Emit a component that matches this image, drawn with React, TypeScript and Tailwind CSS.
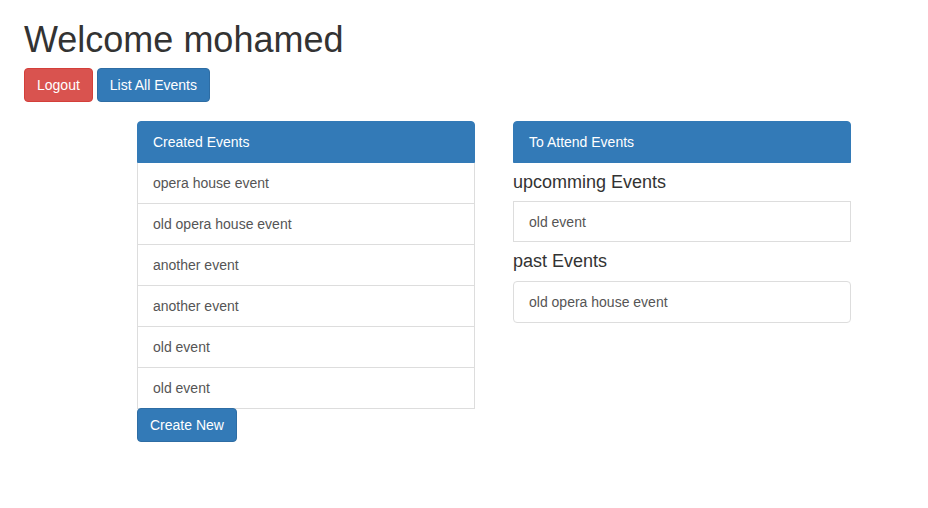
const FONT = "font-['Liberation_Sans',Helvetica,Arial,sans-serif]";
const ITEM = "border border-[#ddd] px-[15px] py-[10px] text-[14px] leading-[20px] text-[#555]";

const created = [
  "opera house event",
  "old opera house event",
  "another event",
  "another event",
  "old event",
  "old event",
];

function PanelHeading({ title }: { title: string }) {
  return (
    <div className="h-[42px] rounded-t-[4px] border border-[#337ab7] bg-[#337ab7] px-[15px] py-[10px] text-[14px] leading-[20px] text-white">
      {title}
    </div>
  );
}

export default function App() {
  return (
    <div className={`${FONT} min-h-[508px] w-full bg-white px-[24px] text-[#333]`}>
      <h1 className="m-0 pt-[20px] text-[36px] font-normal leading-[39.6px] text-[#333]">
        Welcome mohamed
      </h1>
      <div className="mt-[8px] flex gap-[4px]">
        <button
          type="button"
          className="h-[34px] rounded-[4px] border border-[#d43f3a] bg-[#d9534f] px-[12px] text-[14px] leading-[20px] text-white"
        >
          Logout
        </button>
        <button
          type="button"
          className="h-[34px] rounded-[4px] border border-[#2e6da4] bg-[#337ab7] px-[12px] text-[14px] leading-[20px] text-white"
        >
          List All Events
        </button>
      </div>

      <div className="mt-[19px] flex gap-[38px] pl-[113px]">
        <div className="w-[338px]">
          <PanelHeading title="Created Events" />
          <div className="flex flex-col">
            {created.map((name, i) => (
              <div
                key={i}
                className={`${ITEM} ${i > 0 ? "-mt-px h-[42px]" : "h-[41px] border-t-0"}`}
              >
                {name}
              </div>
            ))}
          </div>
          <button
            type="button"
            className="-mt-px h-[34px] rounded-[4px] border border-[#2e6da4] bg-[#337ab7] px-[12px] text-[14px] leading-[20px] text-white"
          >
            Create New
          </button>
        </div>

        <div className="w-[338px]">
          <PanelHeading title="To Attend Events" />
          <h4 className="m-0 mt-[9px] text-[18px] font-normal leading-[20px] text-[#333]">
            upcomming Events
          </h4>
          <div className={`${ITEM} mt-[9px] h-[41px]`}>old event</div>
          <h4 className="m-0 mt-[9px] text-[18px] font-normal leading-[20px] text-[#333]">
            past Events
          </h4>
          <div className={`${ITEM} mt-[10px] h-[42px] rounded-[4px]`}>old opera house event</div>
        </div>
      </div>
    </div>
  );
}
